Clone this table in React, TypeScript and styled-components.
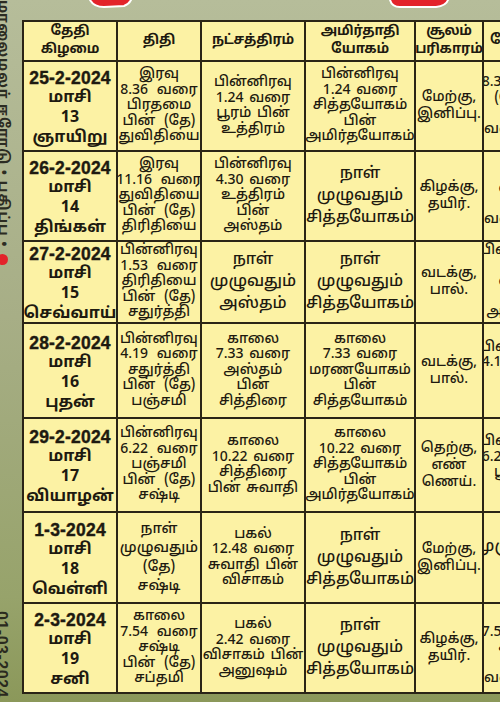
import styled, { createGlobalStyle } from "styled-components";

const GlobalStyle = createGlobalStyle`
  html, body {
    margin: 0;
    padding: 0;
  }
  body {
    font-family: "Noto Sans Tamil", "Lohit Tamil", "Noto Sans", "Liberation Sans", sans-serif;
    background: #a7af86;
  }
`;

type CellData = {
  lines: string[];
  size?: number;
  lh?: number;
  spread?: boolean;
};

type RowData = {
  h: number;
  date: string[];
  cells: CellData[];
};

const big = (lines: string[]): CellData => ({ lines, size: 16, lh: 22 });
const small = (lines: string[]): CellData => ({ lines, size: 14, lh: 15.5 });
const thithi = (lines: string[]): CellData => ({ lines, size: 14, lh: 15.5, spread: true });
const soolam = (lines: string[]): CellData => ({ lines, size: 14, lh: 17 });

const headers = [
  ["தேதி", "கிழமை"],
  ["திதி"],
  ["நட்சத்திரம்"],
  ["அமிர்தாதி", "யோகம்"],
  ["சூலம்", "பரிகாரம்"],
  ["யோகம்"],
];

const rows: RowData[] = [
  {
    h: 88,
    date: ["25-2-2024", "மாசி", "13", "ஞாயிறு"],
    cells: [
      thithi(["இரவு", "8.36 வரை", "பிரதமை", "பின் (தே)", "துவிதியை"]),
      small(["பின்னிரவு", "1.24 வரை", "பூரம் பின்", "உத்திரம்"]),
      small(["பின்னிரவு", "1.24 வரை", "சித்தயோகம்", "பின்", "அமிர்தயோகம்"]),
      soolam(["மேற்கு,", "இனிப்பு."]),
      small(["8.36 வரை", "(கௌ)", "", "வணிசை"]),
    ],
  },
  {
    h: 88,
    date: ["26-2-2024", "மாசி", "14", "திங்கள்"],
    cells: [
      thithi(["இரவு", "11.16 வரை", "துவிதியை", "பின் (தே)", "திரிதியை"]),
      small(["பின்னிரவு", "4.30 வரை", "உத்திரம்", "பின்", "அஸ்தம்"]),
      big(["நாள்", "முழுவதும்", "சித்தயோகம்"]),
      soolam(["கிழக்கு,", "தயிர்."]),
      small(["11.16", "வரை", "", "வணிசை"]),
    ],
  },
  {
    h: 80,
    date: ["27-2-2024", "மாசி", "15", "செவ்வாய்"],
    cells: [
      thithi(["பின்னிரவு", "1.53 வரை", "திரிதியை", "பின் (தே)", "சதுர்த்தி"]),
      big(["நாள்", "முழுவதும்", "அஸ்தம்"]),
      big(["நாள்", "முழுவதும்", "சித்தயோகம்"]),
      soolam(["வடக்கு,", "பால்."]),
      small(["பின்னிரவு", "1.53", "வரை", "", "அமிர்தம்"]),
    ],
  },
  {
    h: 93,
    date: ["28-2-2024", "மாசி", "16", "புதன்"],
    cells: [
      thithi(["பின்னிரவு", "4.19 வரை", "சதுர்த்தி", "பின் (தே)", "பஞ்சமி"]),
      small(["காலை", "7.33 வரை", "அஸ்தம்", "பின்", "சித்திரை"]),
      small(["காலை", "7.33 வரை", "மரணயோகம்", "பின்", "சித்தயோகம்"]),
      soolam(["வடக்கு,", "பால்."]),
      small(["பின்னிரவு", "4.19 வரை", "", "பின்"]),
    ],
  },
  {
    h: 92,
    date: ["29-2-2024", "மாசி", "17", "வியாழன்"],
    cells: [
      thithi(["பின்னிரவு", "6.22 வரை", "பஞ்சமி", "பின் (தே)", "சஷ்டி"]),
      small(["காலை", "10.22 வரை", "சித்திரை", "பின் சுவாதி"]),
      small(["காலை", "10.22 வரை", "சித்தயோகம்", "பின்", "அமிர்தயோகம்"]),
      soolam(["தெற்கு,", "எண்", "ணெய்."]),
      small(["பின்னிரவு", "6.22 வரை", "பூர்வம்", ""]),
    ],
  },
  {
    h: 89,
    date: ["1-3-2024", "மாசி", "18", "வெள்ளி"],
    cells: [
      { lines: ["நாள்", "முழுவதும்", "(தே)", "சஷ்டி"], size: 14.5, lh: 19 },
      small(["பகல்", "12.48 வரை", "சுவாதி பின்", "விசாகம்"]),
      big(["நாள்", "முழுவதும்", "சித்தயோகம்"]),
      soolam(["மேற்கு,", "இனிப்பு."]),
      big(["முழுவதும்", ""]),
    ],
  },
  {
    h: 88,
    date: ["2-3-2024", "மாசி", "19", "சனி"],
    cells: [
      thithi(["காலை", "7.54 வரை", "சஷ்டி", "பின் (தே)", "சப்தமி"]),
      small(["பகல்", "2.42 வரை", "விசாகம் பின்", "அனுஷம்"]),
      big(["நாள்", "முழுவதும்", "சித்தயோகம்"]),
      soolam(["கிழக்கு,", "தயிர்."]),
      small(["", "7.54 வரை", "சஷ்டி", "", "வணிசை"]),
    ],
  },
];

const App = () => {
  return (
    <>
      <GlobalStyle />
      <Page>
        <TopBand>
          <svg width="478" height="20" viewBox="0 0 478 20">
            <path
              d="M68,-4 L68,0 Q72,7 82,7 L102,6 Q107,4 109,0 L109,-4 Z"
              fill="#e3232a"
              stroke="#ffffff"
              strokeWidth="2"
            />
            <path
              d="M368,-4 L368,0 Q370,7 378,7 L414,7 Q424,6 426,0 L426,-4 Z"
              fill="#e3232a"
              stroke="#ffffff"
              strokeWidth="2"
            />
          </svg>
        </TopBand>
        <Strip>
          <Masthead>
            மாலைமலர் ஈரோடு • பதிப்பு •<RedDot />
          </Masthead>
          <IssueDate>01-03-2024</IssueDate>
        </Strip>
        <Table $rows={rows.map((r) => r.h)}>
          {headers.map((h, i) => (
            <HeadCell key={i}>
              {h.map((l, j) => (
                <div key={j}>{l}</div>
              ))}
            </HeadCell>
          ))}
          {rows.map((r, i) => (
            <Row key={i} r={r} />
          ))}
        </Table>
      </Page>
    </>
  );
};

const Row = ({ r }: { r: RowData }) => (
  <>
    <DateCell>
      <DateLine>{r.date[0]}</DateLine>
      {r.date.slice(1).map((l, j) => (
        <div key={j}>{l}</div>
      ))}
    </DateCell>
    {r.cells.map((c, j) => (
      <Cell key={j} $size={c.size ?? 14} $lh={c.lh ?? 15.5} $spread={!!c.spread}>
        {c.lines.map((l, k) => (
          <div key={k}>{l || "\u00a0"}</div>
        ))}
      </Cell>
    ))}
  </>
);

export default App;

const Page = styled.div`
  width: 500px;
  height: 702px;
  overflow: hidden;
  display: grid;
  grid-template-columns: 22px minmax(0, 1fr);
  grid-template-rows: 20px 1fr;
  background: linear-gradient(180deg, #b6bd9a 0%, #a7ae86 45%, #97a36b 85%, #8b985a 100%);
`;

const TopBand = styled.div`
  grid-column: 2;
  grid-row: 1;
  height: 20px;
  overflow: hidden;

  svg {
    display: block;
  }
`;

const Strip = styled.div`
  grid-column: 1;
  grid-row: 1 / span 2;
  display: flex;
  flex-direction: column;
  justify-content: space-between;
  align-items: flex-start;
  overflow: hidden;
  padding-bottom: 4px;
`;

const Masthead = styled.div`
  writing-mode: vertical-rl;
  margin-left: -6px;
  font-size: 14px;
  font-weight: 700;
  color: #2c2c22;
  letter-spacing: 1px;
  display: flex;
  align-items: center;
`;

const RedDot = styled.span`
  display: inline-block;
  width: 11px;
  height: 11px;
  border-radius: 50%;
  background: #e3232a;
  margin-top: 6px;
`;

const IssueDate = styled.div`
  writing-mode: vertical-rl;
  margin-left: -8px;
  font-family: "Liberation Sans", Arial, sans-serif;
  font-size: 16px;
  font-weight: 700;
  color: #2a2a1e;
  letter-spacing: 0.5px;
`;

const Table = styled.div<{ $rows: number[] }>`
  grid-column: 2;
  grid-row: 2;
  width: 528px;
  align-self: start;
  display: grid;
  grid-template-columns: 92px 82px 102px 108px 66px 70px;
  grid-template-rows: 38px ${(p) => p.$rows.map((h) => `${h}px`).join(" ")};
  gap: 2px;
  padding: 2px;
  background: #2a2416;
  color: #1e1a10;
`;

const BaseCell = styled.div`
  background: #fcf2a4;
  display: flex;
  flex-direction: column;
  align-items: center;
  justify-content: center;
  text-align: center;
  white-space: nowrap;
  overflow: hidden;
`;

const HeadCell = styled(BaseCell)`
  font-size: 13.5px;
  line-height: 18px;
  font-weight: 700;
  letter-spacing: -0.2px;
`;

const DateCell = styled(BaseCell)`
  font-size: 16px;
  line-height: 20px;
  font-weight: 700;
  padding-top: 4px;
`;

const DateLine = styled.div`
  font-family: "Liberation Sans", Arial, sans-serif;
  font-size: 17.5px;
  font-weight: 700;
  letter-spacing: 0.2px;
  -webkit-text-stroke: 0.4px #1e1a10;
`;

const Cell = styled(BaseCell)<{ $size: number; $lh: number; $spread: boolean }>`
  font-size: ${(p) => p.$size}px;
  line-height: ${(p) => p.$lh}px;
  word-spacing: ${(p) => (p.$spread ? "5px" : "2px")};
  font-weight: 500;
`;
